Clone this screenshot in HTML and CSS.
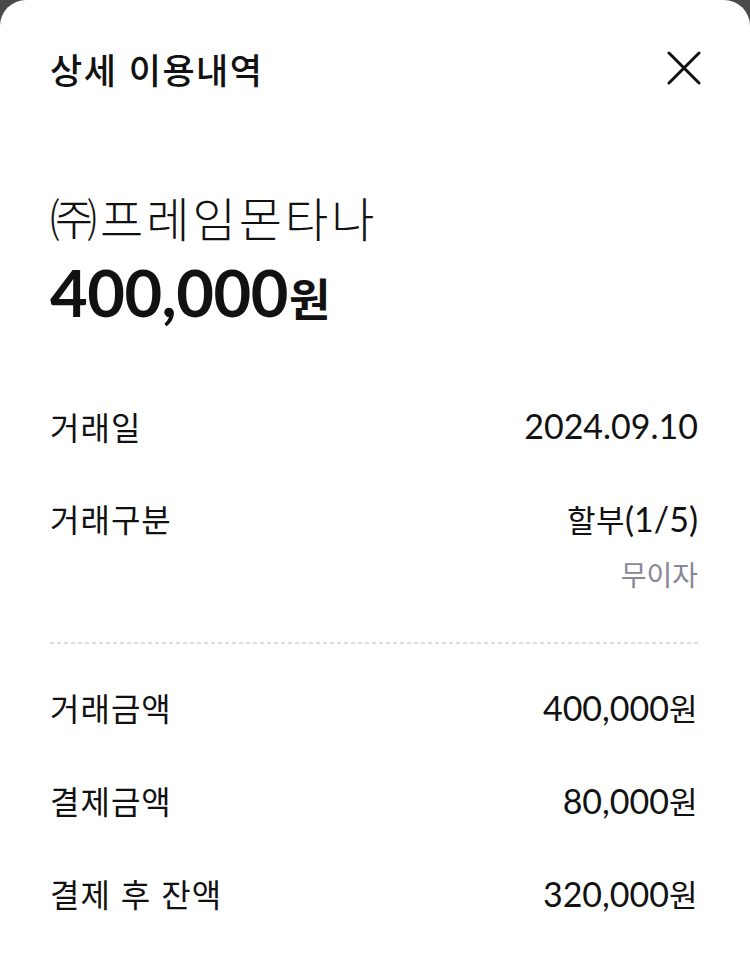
FILE: index.html
```html
<!DOCTYPE html>
<html lang="ko">
<head>
<meta charset="utf-8">
<title>상세 이용내역</title>
<link rel="stylesheet" href="styles.css">
</head>
<body>
<div class="sheet">
  <header class="header">
    <h1 class="title">상세 이용내역</h1>
    <button class="close" aria-label="닫기">
      <svg width="34" height="34" viewBox="0 0 34 34"><path d="M2 2 L32 32 M32 2 L2 32" stroke="#111" stroke-width="3" stroke-linecap="round" fill="none"/></svg>
    </button>
  </header>

  <section class="summary">
    <div class="merchant">㈜프레임몬타나</div>
    <div class="amount"><span class="num">400,000</span><span class="won">원</span></div>
  </section>

  <section class="details">
    <div class="row">
      <div class="label">거래일</div>
      <div class="value num">2024.09.10</div>
    </div>
    <div class="row">
      <div class="label">거래구분</div>
      <div class="value-group">
        <div class="value"><span class="kr">할부</span><span class="num">(1/5)</span></div>
        <div class="sub">무이자</div>
      </div>
    </div>
    <div class="divider"></div>
    <div class="row">
      <div class="label">거래금액</div>
      <div class="value"><span class="num">400,000</span><span class="kr">원</span></div>
    </div>
    <div class="row">
      <div class="label">결제금액</div>
      <div class="value"><span class="num">80,000</span><span class="kr">원</span></div>
    </div>
    <div class="row">
      <div class="label">결제 후 잔액</div>
      <div class="value"><span class="num">320,000</span><span class="kr">원</span></div>
    </div>
  </section>
</div>
</body>
</html>
```

FILE: styles.css
```css
html, body {
  margin: 0;
  padding: 0;
}
body {
  background: #4a4a4a;
  font-family: "Noto Sans CJK KR", "Noto Sans", sans-serif;
  color: #111;
}
.sheet {
  background: #fff;
  border-radius: 26px 26px 0 0;
  min-height: 960px;
  padding: 40px 50px 0 50px;
  box-sizing: border-box;
}
.header {
  height: 56px;
  display: flex;
  align-items: center;
  justify-content: space-between;
}
.title {
  margin: 0;
  font-size: 35px;
  font-weight: 500;
  letter-spacing: 1.5px;
}
.close {
  border: 0;
  background: none;
  padding: 0;
  margin-right: -1px;
  width: 34px;
  height: 34px;
  display: flex;
}
.summary {
  margin-top: 93px;
}
.merchant {
  height: 56px;
  line-height: 56px;
  font-size: 47px;
  font-weight: 300;
  letter-spacing: 3px;
}
.amount {
  margin-top: 12px;
  height: 70px;
  line-height: 70px;
  display: flex;
  align-items: baseline;
}
.amount .num {
  font-family: "Lato", sans-serif;
  font-weight: 700;
  font-size: 65px;
  letter-spacing: -0.5px;
}
.amount .won {
  font-family: "Noto Sans CJK KR", sans-serif;
  font-weight: 700;
  font-size: 45px;
  margin-left: 1px;
}
.details {
  margin-top: 53px;
}
.row {
  display: flex;
  justify-content: space-between;
  align-items: flex-start;
  padding: 24px 0;
}
.label {
  font-size: 32px;
  line-height: 44px;
  font-weight: 400;
  letter-spacing: 1px;
}
.value {
  font-size: 32px;
  line-height: 44px;
  text-align: right;
  margin-right: 2px;
}
.num {
  font-family: "Lato", sans-serif;
  font-size: 34px;
}
.kr {
  font-family: "Noto Sans CJK KR", sans-serif;
  font-size: 31px;
  letter-spacing: 0.5px;
}
.value-group {
  display: flex;
  flex-direction: column;
  align-items: flex-end;
}
.sub {
  margin-top: 15px;
  line-height: 36px;
  font-size: 28px;
  color: #878797;
  margin-right: 2px;
}
.divider {
  margin: 26px 0 17px;
  height: 2px;
  background-image: repeating-linear-gradient(to right, #dcdcdc 0 4px, transparent 4px 7px);
}
```
